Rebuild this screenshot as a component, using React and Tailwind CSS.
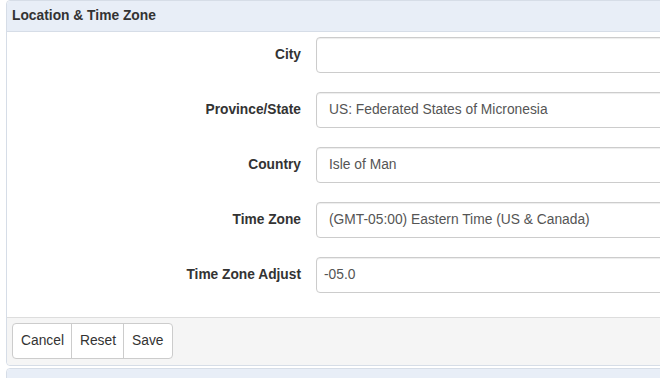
import React from "react";

const rows = [
  { label: "City", value: "", pl: "pl-[12px]" },
  { label: "Province/State", value: "US: Federated States of Micronesia", pl: "pl-[12px]" },
  { label: "Country", value: "Isle of Man", pl: "pl-[12px]" },
  { label: "Time Zone", value: "(GMT-05:00) Eastern Time (US & Canada)", pl: "pl-[12px]" },
  { label: "Time Zone Adjust", value: "-05.0", pl: "pl-[7px]" },
];

export default function App() {
  return (
    <div
      className="w-[660px] h-[378px] overflow-hidden bg-white text-[13.8px] text-[#333]"
      style={{ fontFamily: '"Liberation Sans", Arial, sans-serif' }}
    >
      <div className="ml-[6px] w-[720px] border border-[#d6dde7] rounded-[4px]">
        <div className="h-[31px] bg-[#e8eef7] border-b border-[#d6dde7] rounded-t-[4px] pl-[5px] font-bold leading-[29px] text-[13.8px]">
          Location &amp; Time Zone
        </div>
        <div className="pt-[5px] pb-[24px] flex flex-col gap-[19px]">
          {rows.map((r) => (
            <div key={r.label} className="flex items-center">
              <div className="w-[294px] text-right font-bold text-[13.75px]">{r.label}</div>
              <div
                className={`ml-[15px] w-[400px] h-[36px] border border-[#ccc] rounded-[4px] bg-white shadow-[inset_0_1px_1px_rgba(0,0,0,0.075)] flex items-center text-[#555] ${r.pl}`}
              >
                {r.value}
              </div>
            </div>
          ))}
        </div>
        <div className="bg-[#f5f5f5] border-t border-[#ddd] pt-[5px] pb-[6px] pl-[5px] rounded-b-[4px]">
          <div className="inline-flex h-[36px] border border-[#ccc] rounded-[4px] bg-white text-[#333]">
            <div className="pl-[8px] pr-[7px] flex items-center">Cancel</div>
            <div className="pl-[8px] pr-[7px] flex items-center border-l border-[#ccc]">Reset</div>
            <div className="pl-[8px] pr-[9px] flex items-center border-l border-[#ccc]">Save</div>
          </div>
        </div>
      </div>
      <div className="ml-[6px] mt-[2px] w-[720px] border border-[#d6dde7] rounded-[4px]">
        <div className="h-[31px] bg-[#e8eef7] pl-[5px] pt-px font-bold leading-[29px] text-[13.8px] rounded-t-[4px]">
          Scheduling Options
        </div>
      </div>
    </div>
  );
}
